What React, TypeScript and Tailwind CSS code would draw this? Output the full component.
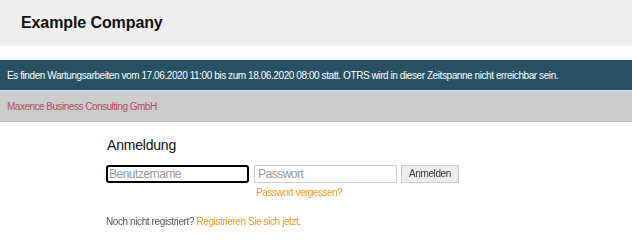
export default function App() {
  return (
    <div className="w-[632px] h-[248px] bg-white overflow-hidden font-['Liberation_Sans',Arial,sans-serif]">
      <div className="h-[46px] bg-[#eeeeee] flex items-center pl-[21px]">
        <h1 className="text-[16px] font-bold text-[#111] leading-none tracking-[-0.1px]">Example Company</h1>
      </div>
      <div className="h-[14px]" />
      <div className="h-[30px] bg-[#275161] flex items-center pl-[7px] text-[10px] tracking-[-0.42px] text-white whitespace-nowrap">
        Es finden Wartungsarbeiten vom 17.06.2020 11:00 bis zum 18.06.2020 08:00 statt. OTRS wird in dieser Zeitspanne nicht erreichbar sein.
      </div>
      <div className="h-[32px] bg-[#cccccc] border-t border-t-[#e6e6e6] border-b border-b-[#bbbbbb] flex items-center pl-[7px] text-[10px] tracking-[-0.5px] text-[#b24a5c]">
        Maxence Business Consulting GmbH
      </div>
      <div className="pl-[106px] pt-[13px]">
        <h2 className="text-[14px] text-[#111] pl-[1px] leading-[20px] tracking-[-0.2px]">Anmeldung</h2>
        <div className="flex items-start gap-[5px] mt-[10px]">
          <input
            autoFocus
            placeholder="Benutzername"
            className="w-[143px] h-[18px] border-2 border-black rounded-[3px] px-[1px] text-[12px] tracking-[-0.5px] text-[#333] placeholder:text-[#999] outline-none"
          />
          <div className="flex flex-col">
            <input
              placeholder="Passwort"
              className="w-[143px] h-[18px] border border-[#cccccc] px-[3px] text-[12px] tracking-[-0.5px] text-[#333] placeholder:text-[#999] outline-none"
            />
            <a className="text-[10px] tracking-[-0.5px] text-[#f7931e] mt-[4px] ml-[2px] leading-[12px]">Passwort vergessen?</a>
          </div>
          <button className="h-[18px] w-[58px] -ml-[1px] bg-[#eeeeee] border border-[#cccccc] text-[10px] tracking-[-0.4px] text-[#333] leading-none">
            Anmelden
          </button>
        </div>
        <p className="text-[10px] tracking-[-0.4px] text-[#555] mt-[15px]">
          Noch nicht registriert? <a className="text-[#f7931e]">Registrieren Sie sich jetzt</a>.
        </p>
      </div>
    </div>
  );
}
